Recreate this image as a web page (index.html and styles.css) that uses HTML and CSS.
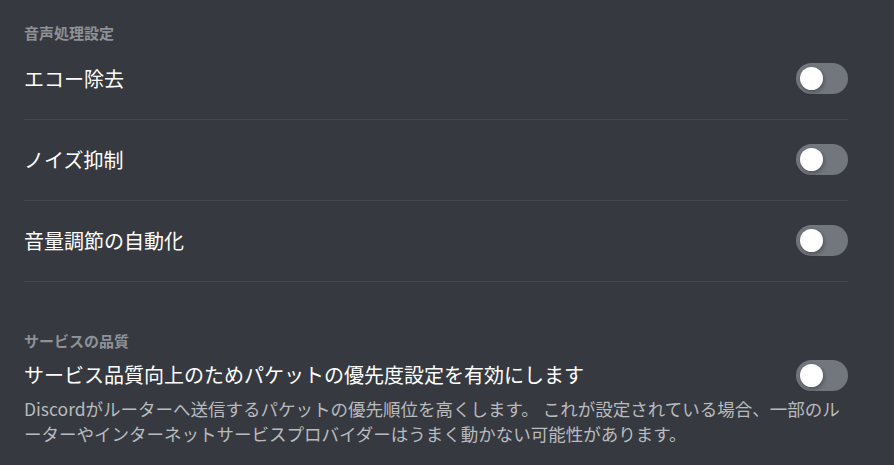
FILE: index.html
```html
<!DOCTYPE html>
<html lang="ja">
<head>
  <meta charset="UTF-8">
  <meta name="viewport" content="width=device-width, initial-scale=1.0">
  <title>音声設定</title>
  <link rel="stylesheet" href="styles.css">
</head>
<body>
  <div class="settings">
    <section class="group">
      <h5 class="group-title">音声処理設定</h5>
      <div class="setting">
        <div class="setting-row">
          <span class="setting-label">エコー除去</span>
          <label class="switch"><input type="checkbox"><span class="knob"></span></label>
        </div>
        <div class="divider"></div>
      </div>
      <div class="setting">
        <div class="setting-row">
          <span class="setting-label">ノイズ抑制</span>
          <label class="switch"><input type="checkbox"><span class="knob"></span></label>
        </div>
        <div class="divider"></div>
      </div>
      <div class="setting">
        <div class="setting-row">
          <span class="setting-label">音量調節の自動化</span>
          <label class="switch"><input type="checkbox"><span class="knob"></span></label>
        </div>
        <div class="divider"></div>
      </div>
    </section>

    <section class="group">
      <h5 class="group-title tight">サービスの品質</h5>
      <div class="setting">
        <div class="setting-row top">
          <span class="setting-label">サービス品質向上のためパケットの優先度設定を有効にします</span>
          <label class="switch"><input type="checkbox"><span class="knob"></span></label>
        </div>
        <div class="setting-note">Discordがルーターへ送信するパケットの優先順位を高くします。 これが設定されている場合、一部のルーターやインターネットサービスプロバイダーはうまく動かない可能性があります。</div>
      </div>
    </section>
  </div>
</body>
</html>
```

FILE: styles.css
```css
body {
  margin: 0;
  background-color: #36393f;
  font-family: 'Noto Sans CJK JP', 'Noto Sans', sans-serif;
  color: #fff;
}

.settings {
  padding: 23px 46px 0 24px;
}

.group {
  margin-bottom: 49px;
}

.group:last-child {
  margin-bottom: 0;
}

.group-title {
  margin: 0 0 20px;
  font-size: 15px;
  line-height: 20px;
  font-weight: bold;
  color: #8e9297;
}

.group-title.tight {
  margin-bottom: 9px;
}

.setting-row {
  display: flex;
  justify-content: space-between;
  align-items: center;
}

.setting-row.top {
  align-items: flex-start;
}

.setting-label {
  font-size: 20px;
  line-height: 30px;
}

.divider {
  height: 1px;
  margin: 25px 0 24px;
  background-color: #45484e;
}

.setting:last-child .divider {
  margin-bottom: 0;
}

.setting-note {
  margin-top: 5px;
  padding-right: 8px;
  font-size: 17.5px;
  line-height: 25px;
  color: #b9bbbe;
  line-break: anywhere;
}

/* toggle switch */
.switch {
  flex: 0 0 52px;
  height: 31px;
  border-radius: 16px;
  background-color: #72767d;
  position: relative;
  cursor: pointer;
}

.switch input {
  display: none;
}

.knob {
  position: absolute;
  top: 4px;
  left: 4px;
  width: 23px;
  height: 23px;
  border-radius: 50%;
  background-color: #fff;
  box-shadow: 1px 2px 4px rgba(0, 0, 0, 0.3);
}
```
